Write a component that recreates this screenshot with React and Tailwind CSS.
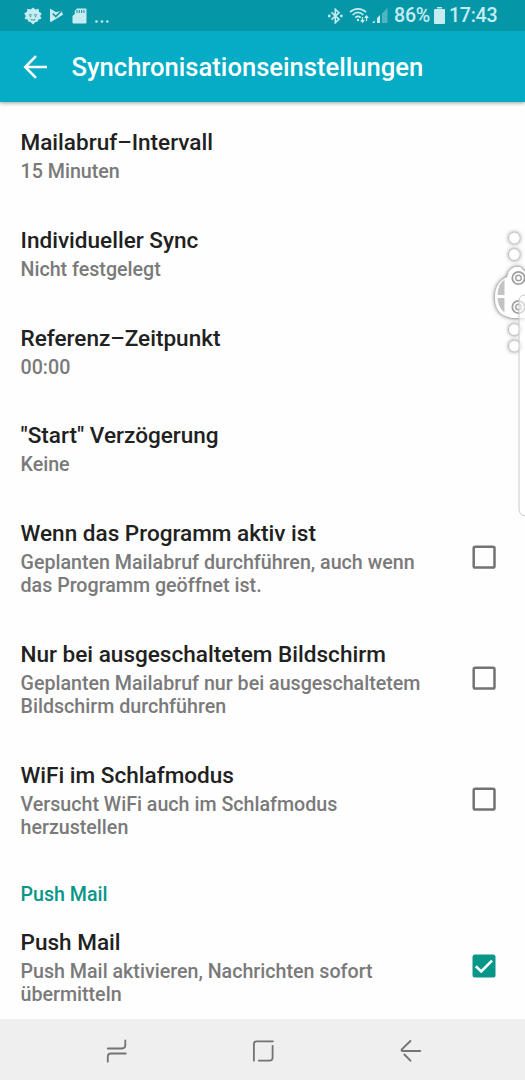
import React from 'react';

const settings = [
  { title: 'Mailabruf–Intervall', lines: ['15 Minuten'] },
  { title: 'Individueller Sync', lines: ['Nicht festgelegt'] },
  { title: 'Referenz–Zeitpunkt', lines: ['00:00'] },
  { title: '"Start" Verzögerung', lines: ['Keine'] },
  { title: 'Wenn das Programm aktiv ist', lines: ['Geplanten Mailabruf durchführen, auch wenn', 'das Programm geöffnet ist.'], checked: false },
  { title: 'Nur bei ausgeschaltetem Bildschirm', lines: ['Geplanten Mailabruf nur bei ausgeschaltetem', 'Bildschirm durchführen'], checked: false },
  { title: 'WiFi im Schlafmodus', lines: ['Versucht WiFi auch im Schlafmodus', 'herzustellen'], checked: false },
];

function Checkbox({ checked }) {
  return (
    <svg className="mb-px h-6 w-6 shrink-0" viewBox="0 0 24 24" role="checkbox" aria-checked={checked}>
      {checked ? (
        <>
          <rect x="0.5" y="0.5" width="23" height="23" rx="2.5" fill="#079688" />
          <path d="M3.8 12.2l5.4 5.3L20 6.6" fill="none" stroke="#fff" strokeWidth="2.6" />
        </>
      ) : (
        <rect x="1.7" y="1.7" width="20.8" height="20.8" rx="1.6" fill="none" stroke="#737373" strokeWidth="2.5" />
      )}
    </svg>
  );
}

function Setting({ title, lines, checked }) {
  return (
    <div className="flex items-center justify-between pt-5 pr-[29px] pb-[19.9px] pl-[20.5px]">
      <div className="whitespace-nowrap">
        <div className="text-[22.55px] leading-[34px] font-medium text-[#212121]">{title}</div>
        <div className="pt-px">
          {lines.map((line) => (
            <div key={line} className="text-[19.65px] leading-[22.9px] font-medium text-[#7a7a7a]">{line}</div>
          ))}
        </div>
      </div>
      {checked !== undefined && <Checkbox checked={checked} />}
    </div>
  );
}

function StatusBar() {
  return (
    <div className="flex h-[31px] items-center bg-[#0597a7] text-[#c5edf1]">
      <svg className="ml-6 h-[18px] w-[18px]" viewBox="0 0 18 18" fill="currentColor">
        <path d="M9 .5l2.4 2 3.2-.7.4 3 2.8 1.6-1.6 2.5 1.3 2.8-3 .8-1.2 2.5-1.5-.2L9 17.5l-2.8-2.7-1.5.2-1.2-2.5-3-.8 1.3-2.8L.2 6.4 3 4.8l.4-3 3.2.7z" />
        <path d="M5 8.4c1-1 2-.8 2.8 0M10.2 8.4c1-1 2-.8 2.8 0M6.8 12.3c1.5 1 3 1 4.4 0" stroke="#4fa9b3" strokeWidth="1.2" fill="none" />
        <circle cx="6.5" cy="9.6" r=".8" fill="#4fa9b3" /><circle cx="11.5" cy="9.6" r=".8" fill="#4fa9b3" />
      </svg>
      <svg className="ml-[7px] h-[15px] w-[15px]" viewBox="0 0 15 15">
        <path d="M1 .8l3 1.5 3 2 5.5-1.5L14 6.7 1.5 14.2 1 13z" fill="currentColor" />
        <path d="M3.7 5.5l3.1 3 5.5-5.5" fill="none" stroke="#16909e" strokeWidth="1.7" />
      </svg>
      <svg className="ml-[8px] h-4 w-[15px]" viewBox="0 0 15 16">
        <path d="M5 .5h8.5q1 0 1 1v13q0 1-1 1H1.5q-1 0-1-1V8L2.8 6V3z" fill="currentColor" />
        <path d="M5 2v3M7.3 2v3M9.6 2v3M11.9 2v3" stroke="#2594a0" strokeWidth="1.1" />
      </svg>
      <svg className="mt-[11px] ml-2 h-[3px] w-[14px]" viewBox="0 0 14 3" fill="currentColor">
        <circle cx="1.5" cy="1.5" r="1.3" /><circle cx="7" cy="1.5" r="1.3" /><circle cx="12.3" cy="1.5" r="1.3" />
      </svg>
      <svg className="ml-auto h-4 w-[15px]" viewBox="0 0 15 16" fill="none" stroke="currentColor" strokeWidth="1.6">
        <path d="M3.5 4.3l7.5 7L7.3 14.7V1.3L11 4.7l-7.5 7" />
        <circle cx="1.3" cy="8" r=".6" /><circle cx="13.4" cy="8" r=".6" />
      </svg>
      <svg className="ml-[6px] h-[17px] w-[20px]" viewBox="0 0 20 17" fill="none" stroke="currentColor" strokeWidth="1.7">
        <path d="M1 5.2C5.5.8 12.5.8 17 5.2M3.6 8C7 4.8 11 4.8 14.4 8M6.3 10.6c1.8-1.6 3.6-1.6 5.4 0" />
        <circle cx="9" cy="13" r="1.2" fill="currentColor" stroke="none" />
        <path d="M13.5 10v5M11.8 13.3l1.7 1.8 1.7-1.8M17.5 14V9M15.8 10.7L17.5 9l1.7 1.7" strokeWidth="1.3" />
      </svg>
      <svg className="ml-[3px] h-[15px] w-[16px]" viewBox="0 0 16 15">
        <path d="M0 15l2.8-2.8V15zM5 15v-5l3-3v8z" fill="currentColor" />
        <path d="M10 15V5.5L15.5 0v15z" fill="#4fb6c1" />
      </svg>
      <span className="ml-[6px] w-[36px] pt-px text-[19.6px] leading-none font-medium tracking-[-0.2px] whitespace-nowrap">86%</span>
      <svg className="ml-[4px] h-[17px] w-[11px]" viewBox="0 0 11 17" fill="currentColor">
        <path d="M3 0h5v1.5H3z" /><rect y="2" width="11" height="15" rx="1" />
      </svg>
      <span className="mr-[27px] ml-[4px] w-[49px] pt-px text-[19.6px] leading-none font-medium tracking-[-0.3px] whitespace-nowrap">17:43</span>
    </div>
  );
}

function EdgeShortcut() {
  return (
    <svg className="absolute top-[220px] right-0 h-[302px] w-[40px]" viewBox="485 220 40 302" fill="none">
      <defs>
        <filter id="edge-shadow" x="-50%" y="-20%" width="200%" height="140%">
          <feDropShadow dx="0" dy="0" stdDeviation="2.2" floodColor="#333" floodOpacity=".9" />
        </filter>
      </defs>
      <g filter="url(#edge-shadow)" fill="#fff">
        <circle cx="514.3" cy="238" r="5.2" /><circle cx="514.3" cy="254.5" r="5.2" />
        <circle cx="514.3" cy="329.5" r="5.2" /><circle cx="514.3" cy="346" r="5.2" />
        <path d="M520 267h-5q-6 2-8 10-12 6-12 20c0 12 5 18 14 20 2 1 4 1 8 1h8v-46z" />
      </g>
      <path d="M504.5 279.5v15.5h-7q.5-11 7-15.5zM497.5 298h7v14.5q-6.5-5-7-14.5z" fill="#c3c3c3" />
      <g fill="#fff" stroke="#a0a0a0" strokeWidth="1.8">
        <circle cx="518.5" cy="278" r="6.2" /><circle cx="518.5" cy="278" r="2.8" strokeWidth="1.4" />
        <circle cx="518.5" cy="307" r="6.2" /><circle cx="518.5" cy="307" r="2.8" strokeWidth="1.4" />
      </g>
      <path d="M525 295q-6 0-6 6v208q0 6 6 7" fill="#fff" fillOpacity=".6" stroke="#c9c9c9" />
    </svg>
  );
}

function NavigationBar() {
  return (
    <nav className="flex h-[61px] shrink-0 items-center bg-[#efefef] pt-[3px] text-[#737373]">
      <svg className="ml-[106px] h-6 w-[22px]" viewBox="0 0 22 24" fill="none" stroke="currentColor" strokeWidth="1.8" strokeLinecap="round">
        <path d="M1.8 9.5H16q3.3 0 3.3-3.2V1.4M19.8 14.5H5q-3.2 0-3.2 3.2v5" />
      </svg>
      <svg className="ml-[124px] h-6 w-6" viewBox="0 0 24 24" fill="none" stroke="currentColor" strokeWidth="1.8" strokeLinecap="round">
        <path d="M1.9 21.7V5.1q0-2.8 2.8-2.8H21M20.6 6.8v11.6q0 3.2-3 3.2H6.8" />
      </svg>
      <svg className="ml-[124px] h-6 w-[22px]" viewBox="0 0 22 24" fill="none" stroke="currentColor" strokeWidth="1.9" strokeLinecap="round">
        <path d="M10.4 2L1.9 10.3q-1.1 1.7 1 1.7h17.4M4.4 15.5l6 6.2" />
      </svg>
    </nav>
  );
}

export default function App() {
  return (
    <main className="relative flex h-[1080px] w-[525px] flex-col overflow-hidden bg-[#fefefe] font-['Roboto',sans-serif]">
      <header className="z-10 h-[102px] shrink-0 bg-[#04adc5] shadow-[0_1px_4px_rgba(0,0,0,0.4)]">
        <StatusBar />
        <div className="flex h-[71px] items-center text-white">
          <svg className="ml-[23px] h-6 w-6" viewBox="0 0 24 24" fill="none" stroke="currentColor" strokeWidth="2.5">
            <path d="M24 12H2.5M13 1.2L2.2 12 13 22.8" />
          </svg>
          <h1 className="ml-[24.5px] pt-px text-[25.6px] leading-8 font-medium whitespace-nowrap">Synchronisationseinstellungen</h1>
        </div>
      </header>
      <section className="min-h-0 flex-1 pt-[4.1px]">
        {settings.map((item) => <Setting key={item.title} title={item.title} lines={item.lines} checked={item.checked} />)}
        <h2 className="h-[47px] pt-[23.6px] pl-[20.5px] text-[19.6px] leading-6 font-medium text-[#079688]">Push Mail</h2>
        <Setting title="Push Mail" lines={['Push Mail aktivieren, Nachrichten sofort', 'übermitteln']} checked />
      </section>
      <NavigationBar />
      <EdgeShortcut />
    </main>
  );
}
